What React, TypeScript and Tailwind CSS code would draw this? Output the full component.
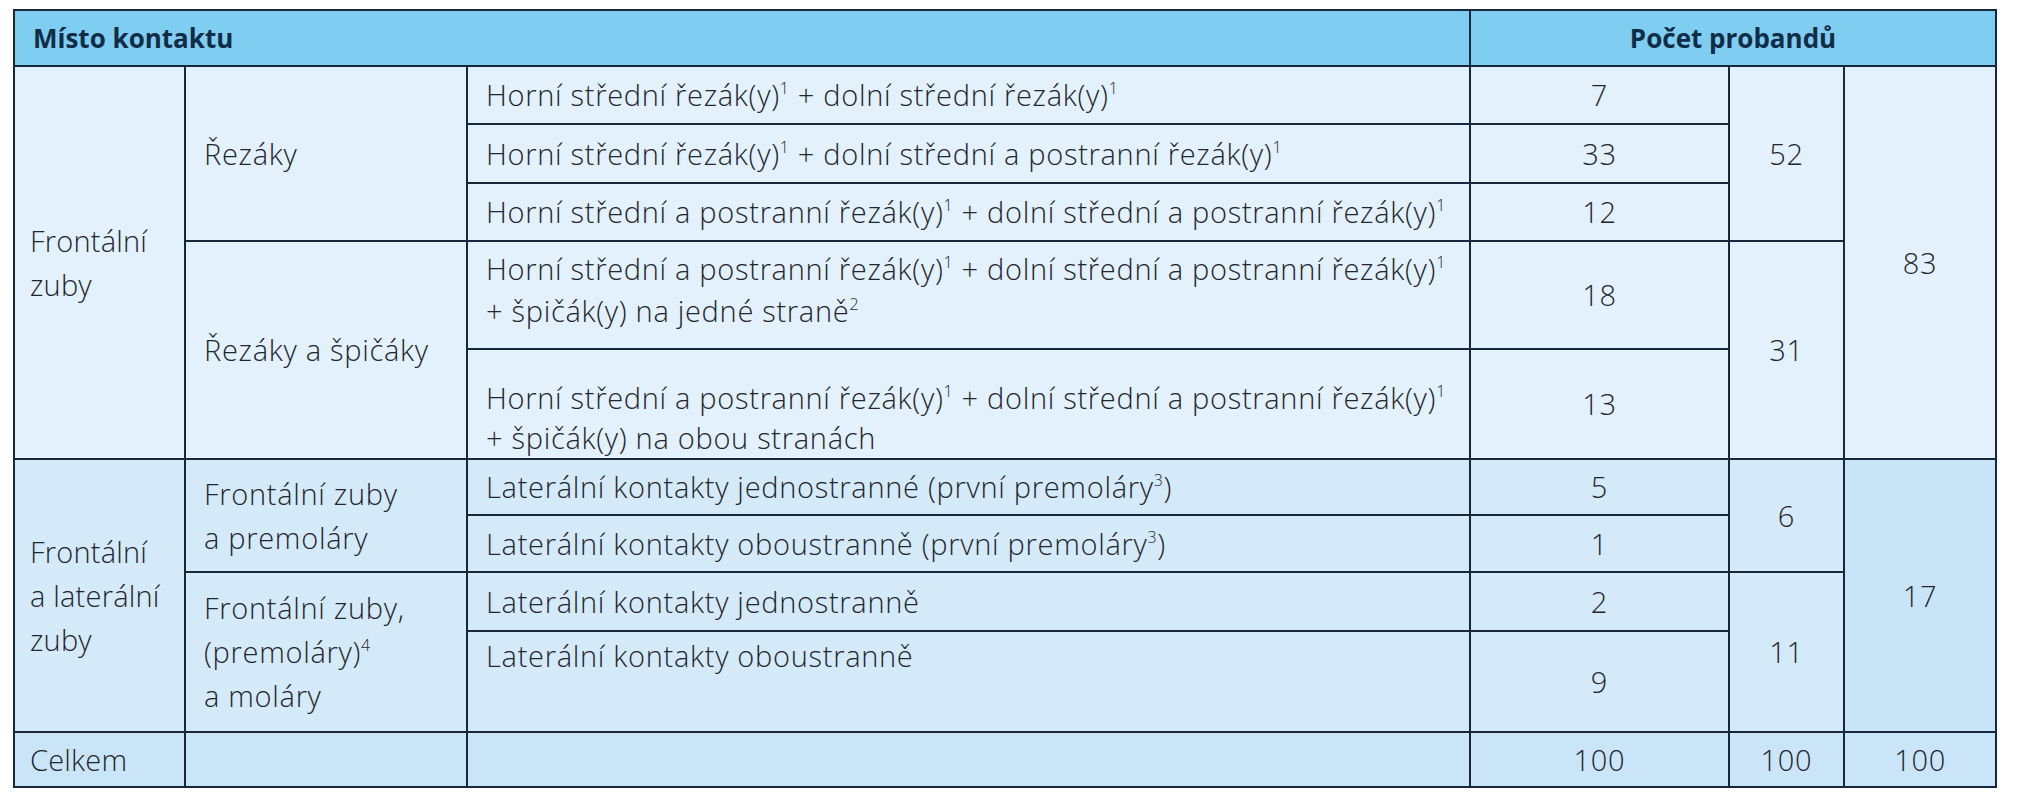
import React from "react";

const Sup = ({ children }: { children: React.ReactNode }) => (
  <sup className="text-[0.55em] -top-[0.75em]">{children}</sup>
);

const td = "border-2 border-[#17283a] px-[18px] align-middle";
const first = "pl-[15px] pr-[4px] whitespace-nowrap tracking-[0.2px]";
const head = "text-[26px] tracking-normal font-bold text-[#102c47]";
const g1 = "bg-[#e2f1fc]";
const g2 = "bg-[#d5eaf9]";
const num = "text-center";

export default function App() {
  return (
    <div className="min-h-screen bg-white pt-[9px] pl-[13px]">
      <table
        className="table-fixed border-collapse text-[29px] font-light tracking-[0.7px] leading-[44px] text-[#1f262e]"
        style={{ width: 1982, fontFamily: '"Open Sans", "Liberation Sans", sans-serif' }}
      >
        <colgroup>
          <col className="w-[171px]" />
          <col className="w-[282px]" />
          <col className="w-[1003px]" />
          <col className="w-[259px]" />
          <col className="w-[115px]" />
          <col className="w-[152px]" />
        </colgroup>
        <thead>
          <tr className="h-[56px] bg-[#80cdf2]">
            <th colSpan={3} className={`${td} text-left ${head}`}>
              Místo kontaktu
            </th>
            <th colSpan={3} className={`${td} text-center ${head}`}>
              Počet probandů
            </th>
          </tr>
        </thead>
        <tbody>
          {/* Frontální zuby */}
          <tr className="h-[58px]">
            <td rowSpan={5} className={`${td} ${g1} ${first}`}>
              Frontální
              <br />
              zuby
            </td>
            <td rowSpan={3} className={`${td} ${g1}`}>Řezáky</td>
            <td className={`${td} ${g1}`}>
              Horní střední řezák(y)<Sup>1</Sup> + dolní střední řezák(y)<Sup>1</Sup>
            </td>
            <td className={`${td} ${g1} ${num}`}>7</td>
            <td rowSpan={3} className={`${td} ${g1} ${num}`}>52</td>
            <td rowSpan={5} className={`${td} ${g1} ${num}`}>83</td>
          </tr>
          <tr className="h-[59px]">
            <td className={`${td} ${g1}`}>
              Horní střední řezák(y)<Sup>1</Sup> + dolní střední a postranní řezák(y)<Sup>1</Sup>
            </td>
            <td className={`${td} ${g1} ${num}`}>33</td>
          </tr>
          <tr className="h-[58px]">
            <td className={`${td} ${g1}`}>
              Horní střední a postranní řezák(y)<Sup>1</Sup> + dolní střední a postranní řezák(y)<Sup>1</Sup>
            </td>
            <td className={`${td} ${g1} ${num}`}>12</td>
          </tr>
          <tr className="h-[108px]">
            <td rowSpan={2} className={`${td} ${g1}`}>Řezáky a špičáky</td>
            <td className={`${td} ${g1} !align-top pt-[6px] leading-[42px]`}>
              Horní střední a postranní řezák(y)<Sup>1</Sup> + dolní střední a postranní řezák(y)<Sup>1</Sup>
              <br />+ špičák(y) na jedné straně<Sup>2</Sup>
            </td>
            <td className={`${td} ${g1} ${num}`}>18</td>
            <td rowSpan={2} className={`${td} ${g1} ${num}`}>31</td>
          </tr>
          <tr className="h-[110px]">
            <td className={`${td} ${g1} !align-top pt-[28px] leading-[40px]`}>
              Horní střední a postranní řezák(y)<Sup>1</Sup> + dolní střední a postranní řezák(y)<Sup>1</Sup>
              <br />+ špičák(y) na obou stranách
            </td>
            <td className={`${td} ${g1} ${num}`}>13</td>
          </tr>

          {/* Frontální a laterální zuby */}
          <tr className="h-[56px]">
            <td rowSpan={4} className={`${td} ${g2} ${first}`}>
              Frontální
              <br />a laterální
              <br />
              zuby
            </td>
            <td rowSpan={2} className={`${td} ${g2}`}>
              Frontální zuby
              <br />a premoláry
            </td>
            <td className={`${td} ${g2}`}>
              Laterální kontakty jednostranné (první premoláry<Sup>3</Sup>)
            </td>
            <td className={`${td} ${g2} ${num}`}>5</td>
            <td rowSpan={2} className={`${td} ${g2} ${num}`}>6</td>
            <td rowSpan={4} className={`${td} bg-[#c8e4f7] ${num}`}>17</td>
          </tr>
          <tr className="h-[57px]">
            <td className={`${td} ${g2}`}>
              Laterální kontakty oboustranně (první premoláry<Sup>3</Sup>)
            </td>
            <td className={`${td} ${g2} ${num}`}>1</td>
          </tr>
          <tr className="h-[59px]">
            <td rowSpan={2} className={`${td} ${g2}`}>
              Frontální zuby,
              <br />
              (premoláry)<Sup>4</Sup>
              <br />a moláry
            </td>
            <td className={`${td} ${g2}`}>Laterální kontakty jednostranně</td>
            <td className={`${td} ${g2} ${num}`}>2</td>
            <td rowSpan={2} className={`${td} ${g2} ${num}`}>11</td>
          </tr>
          <tr className="h-[101px]">
            <td className={`${td} ${g2} !align-top pt-[2px]`}>Laterální kontakty oboustranně</td>
            <td className={`${td} ${g2} ${num}`}>9</td>
          </tr>

          <tr className="h-[55px] bg-[#cae5f8]">
            <td className={`${td} ${first}`}>Celkem</td>
            <td className={td}></td>
            <td className={td}></td>
            <td className={`${td} ${num}`}>100</td>
            <td className={`${td} ${num}`}>100</td>
            <td className={`${td} ${num}`}>100</td>
          </tr>
        </tbody>
      </table>
    </div>
  );
}
